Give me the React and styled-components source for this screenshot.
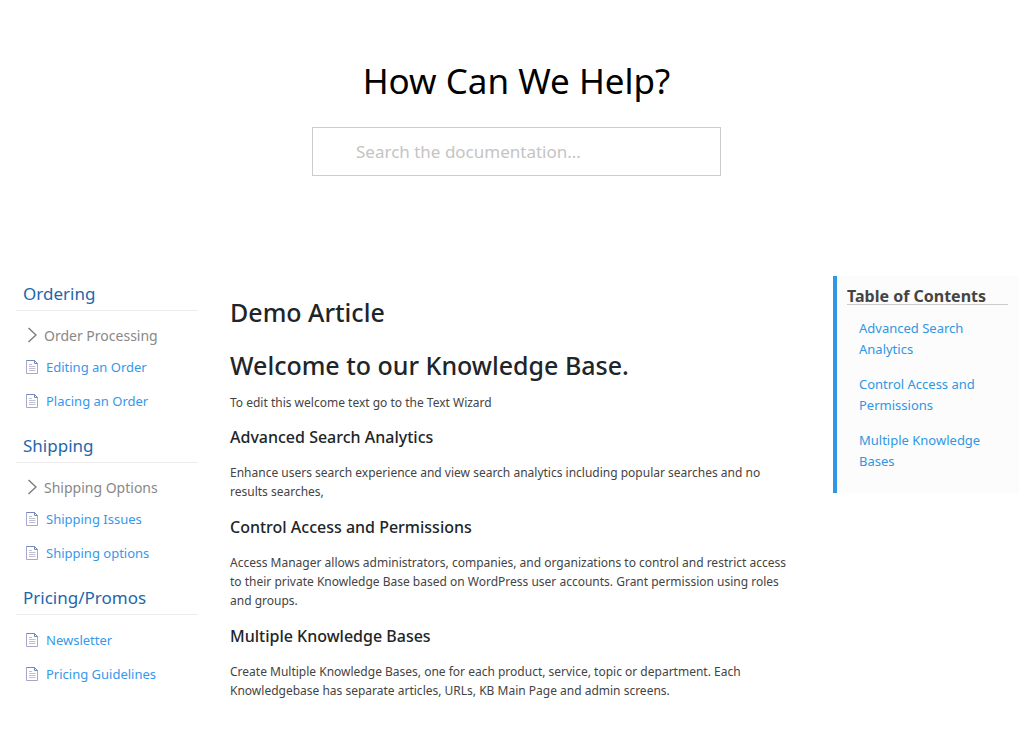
import React from "react";
import styled, { createGlobalStyle } from "styled-components";

const GlobalStyle = createGlobalStyle`
  *, *::before, *::after { box-sizing: border-box; }
  body {
    margin: 0;
    background: #fff;
    color: #444;
    font-family: "Segoe UI", "Noto Sans", "Open Sans", sans-serif;
    font-size: 12px;
  }
  h1, h2, h3, p, ul { margin: 0; padding: 0; }
  ul { list-style: none; }
`;

const Page = styled.div`
  padding: 51px 9px 40px 16px;
`;

const SearchForm = styled.form`
  display: flex;
  flex-direction: column;
  align-items: center;
  gap: 17px;
  padding-right: 2px;
  margin-bottom: 100px;
`;

const SearchTitle = styled.h1`
  font-size: 35px;
  font-weight: 400;
  line-height: 59px;
  color: #000;
`;

const SearchLabel = styled.label`
  color: inherit;
`;

const SearchInput = styled.input`
  width: 409px;
  max-width: 100%;
  height: 49px;
  padding: 0 43px;
  border: 1px solid #ccc;
  border-radius: 0;
  background: #fff;
  color: #444;
  font-family: inherit;
  font-size: 17px;
  outline: none;
  &::placeholder { color: #c4c4c4; opacity: 1; }
`;

const Columns = styled.div`
  display: grid;
  grid-template-columns: 182px minmax(0, 1fr) 186px;
  column-gap: 32px;
  align-items: start;
`;

const Sidebar = styled.nav`
  display: flex;
  flex-direction: column;
  gap: 10px;
`;

const CategoryTitle = styled.h2`
  padding: 4px 7px 2px;
  margin-bottom: 8px;
  border-bottom: 1px solid #ececec;
  font-size: 17px;
  font-weight: 400;
  line-height: 28px;
  color: #1e66ab;
`;

const SubCategory = styled.button`
  display: flex;
  align-items: center;
  gap: 6px;
  width: 100%;
  height: 31px;
  padding: 1px 0 0 11px;
  border: 0;
  background: none;
  color: #888;
  font-family: inherit;
  font-size: 14px;
  text-align: left;
  cursor: pointer;
`;

const ArticleLink = styled.a`
  display: flex;
  align-items: center;
  gap: 8px;
  height: 34px;
  padding-left: 10px;
  color: #3598ec;
  font-size: 13px;
  text-decoration: none;
`;

const Article = styled.article`
  padding: 18px 5px 0 0;
`;

const Heading = styled.h2`
  margin-bottom: ${(p) => (p.$last ? 10 : 17)}px;
  font-size: 25px;
  font-weight: 500;
  line-height: 36px;
  color: #212529;
`;

const SubHeading = styled.h3`
  margin: 13px 0 14px;
  font-size: 16px;
  font-weight: 500;
  line-height: 24px;
  color: #212529;

  section + section > & { margin-top: 14px; }
`;

const Paragraph = styled.p`
  line-height: 19px;
`;

const Toc = styled.aside`
  padding: 8px 11px 21px 10px;
  border-left: 4px solid #2f97e3;
  background: #fcfcfc;
`;

const TocTitle = styled.h2`
  margin-bottom: 13px;
  border-bottom: 1px solid #ccc;
  font-size: 16px;
  font-weight: 700;
  line-height: 24px;
  height: 21px;
  color: #444;
`;

const TocList = styled.ul`
  display: flex;
  flex-direction: column;
  gap: 14px;
  padding-left: 12px;
`;

const TocLink = styled.a`
  display: block;
  color: #2f97e3;
  font-size: 13px;
  line-height: 21px;
  text-decoration: none;
`;

const ChevronIcon = () => (
  <svg width="11" height="16" viewBox="0 0 11 16" fill="none" stroke="#777" aria-hidden="true">
    <path d="M1.5 1 L9 8 L1.5 15" strokeWidth="1.3" />
  </svg>
);

const DocumentIcon = () => (
  <svg width="12" height="14" viewBox="0 0 12 14" fill="none" aria-hidden="true">
    <path d="M.5 .5H8.5L11.5 3.5V13.5H.5Z" fill="#fff" stroke="#a9a6cc" />
    <path d="M.5 .5H8.5L11.5 3.5H8.5V.5" stroke="#7488bd" />
    <path d="M3 4.5H6M3 6.5H9.5M3 8.5H9.5M3 10.5H9.5" stroke="#bcc0d0" />
  </svg>
);

const categories = [
  { title: "Ordering", sub: "Order Processing", articles: ["Editing an Order", "Placing an Order"] },
  { title: "Shipping", sub: "Shipping Options", articles: ["Shipping Issues", "Shipping options"] },
  { title: "Pricing/Promos", articles: ["Newsletter", "Pricing Guidelines"] },
];

const sections = [
  {
    id: "search-analytics",
    title: "Advanced Search Analytics",
    text: "Enhance users search experience and view search analytics including popular searches and no results searches,",
  },
  {
    id: "access",
    title: "Control Access and Permissions",
    text: "Access Manager allows administrators, companies, and organizations to control and restrict access to their private Knowledge Base based on WordPress user accounts. Grant permission using roles and groups.",
  },
  {
    id: "multiple",
    title: "Multiple Knowledge Bases",
    text: "Create Multiple Knowledge Bases, one for each product, service, topic or department. Each Knowledgebase has separate articles, URLs, KB Main Page and admin screens.",
  },
];

export default function App() {
  return (
    <>
      <GlobalStyle />
      <Page>
        <SearchForm role="search" onSubmit={(e) => e.preventDefault()}>
          <SearchTitle>
            <SearchLabel htmlFor="kb-search">How Can We Help?</SearchLabel>
          </SearchTitle>
          <SearchInput id="kb-search" type="text" placeholder="Search the documentation..." />
        </SearchForm>
        <Columns>
          <Sidebar>
            {categories.map((c) => (
              <section key={c.title}>
                <CategoryTitle>{c.title}</CategoryTitle>
                {c.sub && (
                  <SubCategory type="button">
                    <ChevronIcon />
                    {c.sub}
                  </SubCategory>
                )}
                <ul>
                  {c.articles.map((a) => (
                    <li key={a}>
                      <ArticleLink href="#article">
                        <DocumentIcon />
                        {a}
                      </ArticleLink>
                    </li>
                  ))}
                </ul>
              </section>
            ))}
          </Sidebar>
          <Article id="article">
            <Heading>Demo Article</Heading>
            <Heading $last>Welcome to our Knowledge Base.</Heading>
            <Paragraph>To edit this welcome text go to the Text Wizard</Paragraph>
            {sections.map((s) => (
              <section key={s.id}>
                <SubHeading id={s.id}>{s.title}</SubHeading>
                <Paragraph>{s.text}</Paragraph>
              </section>
            ))}
          </Article>
          <Toc>
            <TocTitle>Table of Contents</TocTitle>
            <TocList>
              {sections.map((s) => (
                <li key={s.id}>
                  <TocLink href={`#${s.id}`}>{s.title}</TocLink>
                </li>
              ))}
            </TocList>
          </Toc>
        </Columns>
      </Page>
    </>
  );
}
